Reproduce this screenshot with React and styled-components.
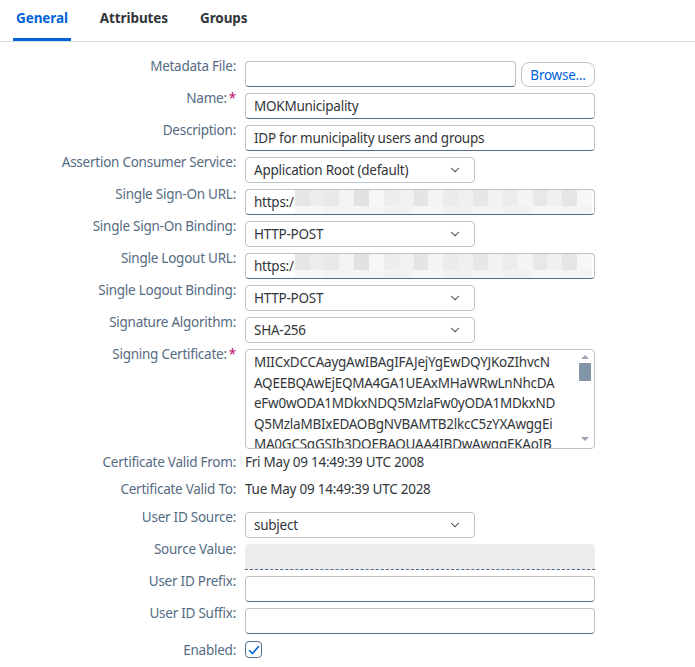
import React from 'react';
import { styled, createGlobalStyle } from 'styled-components';
import { ChevronDown } from 'lucide-react';

const TEXT_COLOR = '#32363a';
const LABEL_COLOR = '#556b82';
const BRAND_BLUE = '#0064d9';
const FIELD_BORDER = '#bcc3ca';
const FIELD_BOTTOM = '#556b81';

const GlobalStyle = createGlobalStyle`
    body {
        margin: 0;
        background: #ffffff;
        font-family: "Noto Sans", "Open Sans", sans-serif;
        font-size: 13.5px;
        letter-spacing: -0.25px;
        color: ${TEXT_COLOR};
    }
`;

const Page = styled.div`
    width: 695px;
    min-height: 667px;
    background: #ffffff;
`;

const TabBar = styled.div`
    display: flex;
    gap: 26px;
    padding-left: 13px;
    height: 41px;
    border-bottom: 1px solid #d9dcdf;
`;

const Tab = styled.div`
    display: flex;
    align-items: center;
    padding: 0 3px 2px;
    font-weight: 700;
    font-size: 13.5px;
    letter-spacing: -0.1px;
    color: ${p => (p.$active ? BRAND_BLUE : TEXT_COLOR)};
    border-bottom: 3px solid ${p => (p.$active ? BRAND_BLUE : 'transparent')};
    border-radius: 2px 2px 0 0;
`;

const Form = styled.div`
    display: flex;
    flex-direction: column;
    gap: 6px;
    padding-top: 19px;
`;

const Row = styled.div`
    display: grid;
    grid-template-columns: 236px 350px;
    column-gap: 9px;
    align-items: start;
    min-height: ${p => p.$height || 'auto'};
`;

const Label = styled.div`
    text-align: right;
    color: ${LABEL_COLOR};
    line-height: 16px;
    margin-top: ${p => p.$offset};
    white-space: nowrap;
`;

const Required = styled.span`
    color: #ba066c;
    margin-left: 2px;
`;

const Value = styled.div`
    line-height: 16px;
    margin-top: -1px;
    color: ${TEXT_COLOR};
`;

const Field = styled.div`
    box-sizing: border-box;
    display: flex;
    align-items: center;
    height: 26px;
    width: ${p => p.$width || '350px'};
    padding: 0 8px;
    background: #ffffff;
    border: 1px solid ${FIELD_BORDER};
    border-bottom-color: ${FIELD_BOTTOM};
    border-radius: 4px;
    color: ${TEXT_COLOR};
    white-space: nowrap;
    overflow: hidden;
`;

const DisabledField = styled.div`
    box-sizing: border-box;
    height: 26px;
    width: 350px;
    background: #eaecee;
    border-bottom: 1px dashed ${FIELD_BOTTOM};
    border-radius: 4px 4px 0 0;
`;

const FileRow = styled.div`
    display: flex;
    gap: 5px;
`;

const BrowseButton = styled.button`
    box-sizing: border-box;
    height: 25px;
    width: 74px;
    margin-top: 1px;
    padding: 0;
    background: #ffffff;
    border: 1px solid ${FIELD_BORDER};
    border-radius: 8px;
    color: ${BRAND_BLUE};
    font-family: inherit;
    font-size: 13.5px;
    letter-spacing: -0.25px;
`;

const SelectBox = styled.div`
    box-sizing: border-box;
    display: flex;
    align-items: center;
    justify-content: space-between;
    height: 26px;
    width: 230px;
    padding: 0 12px 0 8px;
    background: #ffffff;
    border: 1px solid ${FIELD_BORDER};
    border-radius: 4px;
    color: ${TEXT_COLOR};
`;

const Redaction = styled.div`
    display: flex;
    flex-direction: column;
    height: 26px;
    margin-left: 1px;
    margin-right: -6px;
    flex: 1;
`;

const RedactionLine = styled.div`
    display: flex;
    flex: ${p => p.$grow};
`;

const Cell = styled.div`
    flex: 1;
    background: ${p => p.$shade};
`;

const CertBox = styled.div`
    box-sizing: border-box;
    display: flex;
    height: 100px;
    width: 350px;
    border: 1px solid ${FIELD_BORDER};
    border-radius: 4px;
    overflow: hidden;
`;

const CertText = styled.div`
    flex: 1;
    padding: 2px 0 0 8px;
    line-height: 20.5px;
    color: ${TEXT_COLOR};
    white-space: nowrap;
    overflow: hidden;
`;

const ScrollRail = styled.div`
    display: flex;
    flex-direction: column;
    align-items: center;
    width: 13px;
    margin-right: 3px;
    padding-top: 5px;
`;

const Arrow = styled.div`
    width: 0;
    height: 0;
    border-left: 4px solid transparent;
    border-right: 4px solid transparent;
    ${p => (p.$down
        ? `border-top: 4px solid #9aa6b2; margin-top: auto; margin-bottom: 7px;`
        : `border-bottom: 4px solid #9aa6b2;`)}
`;

const Thumb = styled.div`
    width: 12px;
    height: 18px;
    margin-top: 4px;
    background: #8396a8;
`;

const CheckBox = styled.div`
    box-sizing: border-box;
    display: flex;
    align-items: center;
    justify-content: center;
    width: 17px;
    height: 17px;
    margin-top: 1px;
    border: 1px solid ${FIELD_BOTTOM};
    border-radius: 4px;
`;

const shadesTop = ['#e6e6e6', '#eeeeee', '#e9e9e9', '#f3f3f3', '#e2e2e2', '#f6f6f6', '#ededed', '#f1f1f1', '#e4e4e4', '#f4f4f4', '#ebebeb', '#efefef', '#e7e7e7', '#f2f2f2', '#ececec', '#f5f5f5', '#e8e8e8', '#f0f0f0', '#e5e5e5', '#f7f7f7'];
const shadesBottom = ['#f7f7f7', '#f3f3f3', '#f5f5f5', '#f2f2f2', '#f6f6f6', '#f0f0f0', '#f4f4f4', '#f1f1f1', '#f6f6f6', '#f3f3f3'];

function Redacted() {
    return (
        <Redaction>
            <RedactionLine $grow={2}>
                {shadesTop.map((s, i) => <Cell key={i} $shade={s} />)}
            </RedactionLine>
            <RedactionLine $grow={1}>
                {shadesBottom.map((s, i) => <Cell key={i} $shade={s} />)}
            </RedactionLine>
        </Redaction>
    );
}

function Select({ value }) {
    return (
        <SelectBox>
            <span>{value}</span>
            <ChevronDown size={14} strokeWidth={1.8} color={TEXT_COLOR} />
        </SelectBox>
    );
}

function FormRow({ label, required, labelOffset = '-3px', height, children }) {
    return (
        <Row $height={height}>
            <Label $offset={labelOffset}>
                {label}:{required && <Required>*</Required>}
            </Label>
            {children}
        </Row>
    );
}

const certLines = [
    'MIICxDCCAaygAwIBAgIFAJejYgEwDQYJKoZIhvcN',
    'AQEEBQAwEjEQMA4GA1UEAxMHaWRwLnNhcDA',
    'eFw0wODA1MDkxNDQ5MzlaFw0yODA1MDkxND',
    'Q5MzlaMBIxEDAOBgNVBAMTB2lkcC5zYXAwggEi',
    'MA0GCSqGSIb3DQEBAQUAA4IBDwAwggEKAoIB',
];

export default function App() {
    return (
        <>
            <GlobalStyle />
            <Page>
                <TabBar>
                    <Tab $active>General</Tab>
                    <Tab>Attributes</Tab>
                    <Tab>Groups</Tab>
                </TabBar>
                <Form>
                    <FormRow label="Metadata File">
                        <FileRow>
                            <Field $width="271px" />
                            <BrowseButton>Browse...</BrowseButton>
                        </FileRow>
                    </FormRow>
                    <FormRow label="Name" required>
                        <Field>MOKMunicipality</Field>
                    </FormRow>
                    <FormRow label="Description">
                        <Field>IDP for municipality users and groups</Field>
                    </FormRow>
                    <FormRow label="Assertion Consumer Service">
                        <Select value="Application Root (default)" />
                    </FormRow>
                    <FormRow label="Single Sign-On URL">
                        <Field>https:/<Redacted /></Field>
                    </FormRow>
                    <FormRow label="Single Sign-On Binding">
                        <Select value="HTTP-POST" />
                    </FormRow>
                    <FormRow label="Single Logout URL">
                        <Field>https:/<Redacted /></Field>
                    </FormRow>
                    <FormRow label="Single Logout Binding">
                        <Select value="HTTP-POST" />
                    </FormRow>
                    <FormRow label="Signature Algorithm">
                        <Select value="SHA-256" />
                    </FormRow>
                    <FormRow label="Signing Certificate" required>
                        <CertBox>
                            <CertText>
                                {certLines.map(line => <div key={line}>{line}</div>)}
                            </CertText>
                            <ScrollRail>
                                <Arrow />
                                <Thumb />
                                <Arrow $down />
                            </ScrollRail>
                        </CertBox>
                    </FormRow>
                    <FormRow label="Certificate Valid From" labelOffset="-1px" height="21px">
                        <Value>Fri May 09 14:49:39 UTC 2008</Value>
                    </FormRow>
                    <FormRow label="Certificate Valid To" labelOffset="-1px" height="24px">
                        <Value>Tue May 09 14:49:39 UTC 2028</Value>
                    </FormRow>
                    <FormRow label="User ID Source">
                        <Select value="subject" />
                    </FormRow>
                    <FormRow label="Source Value">
                        <DisabledField />
                    </FormRow>
                    <FormRow label="User ID Prefix">
                        <Field />
                    </FormRow>
                    <FormRow label="User ID Suffix">
                        <Field />
                    </FormRow>
                    <FormRow label="Enabled" labelOffset="2px">
                        <CheckBox>
                            <svg width="12" height="12" viewBox="0 0 12 12" fill="none">
                                <path d="M1.5 6.5 L4.5 9.5 L10.5 2.5" stroke={BRAND_BLUE} strokeWidth="1.6" strokeLinecap="round" strokeLinejoin="round" />
                            </svg>
                        </CheckBox>
                    </FormRow>
                </Form>
            </Page>
        </>
    );
}
